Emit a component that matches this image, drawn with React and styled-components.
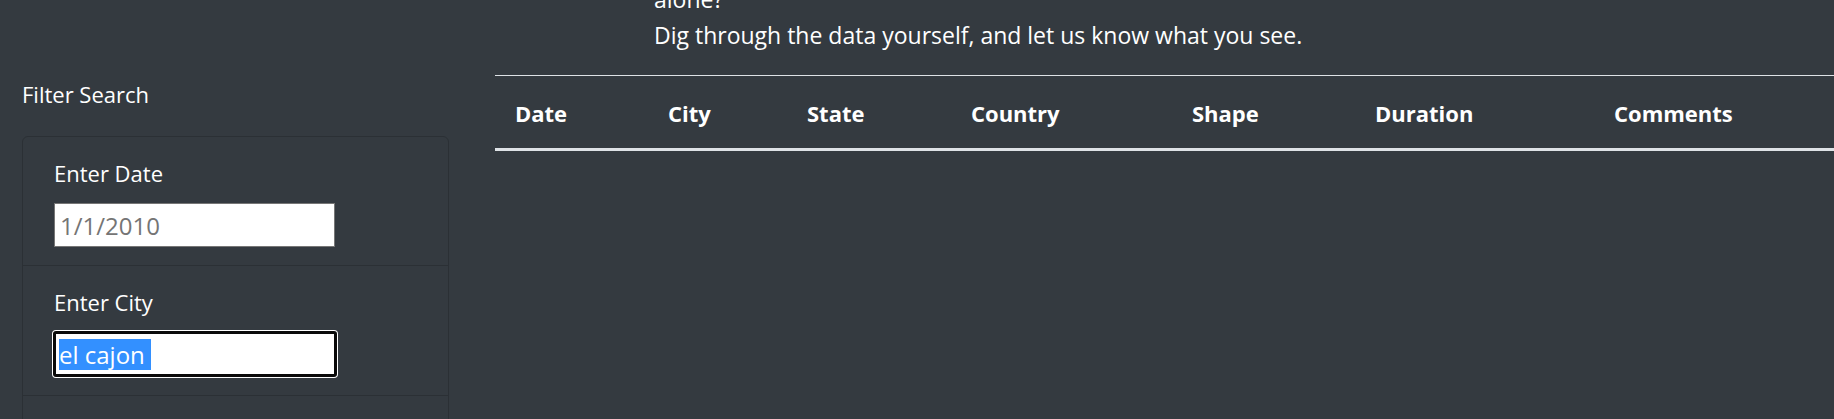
import React from "react";
import styled, { createGlobalStyle } from "styled-components";

const GlobalStyle = createGlobalStyle`
  html, body {
    margin: 0;
    padding: 0;
    background: #343a40;
    overflow: hidden;
  }
  body {
    font-family: "Open Sans", "Noto Sans", "Liberation Sans", sans-serif;
    font-size: 22px;
    line-height: 36px;
    color: #ffffff;
  }
  * { box-sizing: border-box; }
`;

const Page = styled.div`
  display: flex;
  align-items: flex-start;
  width: 1834px;
  height: 419px;
  overflow: hidden;
`;

const Sidebar = styled.aside`
  flex: 0 0 495px;
  padding: 76px 46px 0 22px;
`;

const SidebarTitle = styled.div`
  font-size: 22px;
  line-height: 36px;
  margin-bottom: 24px;
`;

const Card = styled.div`
  border: 1px solid #2b3035;
  border-radius: 6px;
`;

const ListItem = styled.div`
  min-height: 60px;
  padding: 18px 30px 18px 31px;
  border-bottom: 1px solid #2b3035;
  display: flex;
  flex-direction: column;
  align-items: flex-start;
`;

const FieldLabel = styled.label`
  display: block;
  font-size: 22px;
  line-height: 36px;
  margin-bottom: 12px;
`;

const TextInput = styled.input`
  width: 281px;
  height: 44px;
  padding: 0 4px 0 5px;
  border: 1px solid #767676;
  border-radius: 0;
  background: #ffffff;
  font-family: inherit;
  font-size: 24px;
  color: #222;
  outline: none;
  &::placeholder {
    color: #757575;
    opacity: 1;
  }
`;

const FocusedInput = styled.div`
  width: 284px;
  height: 46px;
  margin: -1px 0 0 -1px;
  padding: 0 3px;
  display: flex;
  align-items: center;
  background: #ffffff;
  border: 3px solid #0a0a0a;
  border-radius: 3px;
  box-shadow: 0 0 0 1px #ffffff;
  font-size: 24px;
  white-space: pre;
`;

const Selection = styled.span`
  background: #3390ff;
  color: #ffffff;
  line-height: 31px;
`;

const Main = styled.main`
  flex: 1 1 auto;
  display: flex;
  flex-direction: column;
`;

const Intro = styled.p`
  margin: -19px 0 22px;
  padding-left: 159px;
  font-size: 23px;
  line-height: 36px;
`;

const Table = styled.table`
  width: 1339px;
  border-collapse: collapse;
  table-layout: fixed;
  color: #ffffff;
`;

const HeadCell = styled.th`
  width: ${(p) => p.$w}px;
  text-align: left;
  font-weight: 700;
  font-size: 22px;
  line-height: 36px;
  padding: 19px 18px 17px 20px;
  border-top: 1px solid #dee2e6;
  border-bottom: 3px solid #dee2e6;
  white-space: nowrap;
`;

const columns = [
  ["Date", 153],
  ["City", 139],
  ["State", 164],
  ["Country", 221],
  ["Shape", 183],
  ["Duration", 239],
  ["Comments", 240],
];

export default function App() {
  return (
    <>
      <GlobalStyle />
      <Page>
        <Sidebar>
          <SidebarTitle>Filter Search</SidebarTitle>
          <Card>
            <ListItem>
              <FieldLabel htmlFor="datetime">Enter Date</FieldLabel>
              <TextInput id="datetime" type="text" placeholder="1/1/2010" />
            </ListItem>
            <ListItem>
              <FieldLabel>Enter City</FieldLabel>
              <FocusedInput role="textbox">
                <Selection>el cajon </Selection>
              </FocusedInput>
            </ListItem>
            <ListItem />
          </Card>
        </Sidebar>
        <Main>
          <Intro>
            alone?
            <br />
            Dig through the data yourself, and let us know what you see.
          </Intro>
          <Table>
            <thead>
              <tr>
                {columns.map(([name, w]) => (
                  <HeadCell key={name} $w={w}>
                    {name}
                  </HeadCell>
                ))}
              </tr>
            </thead>
            <tbody />
          </Table>
        </Main>
      </Page>
    </>
  );
}
